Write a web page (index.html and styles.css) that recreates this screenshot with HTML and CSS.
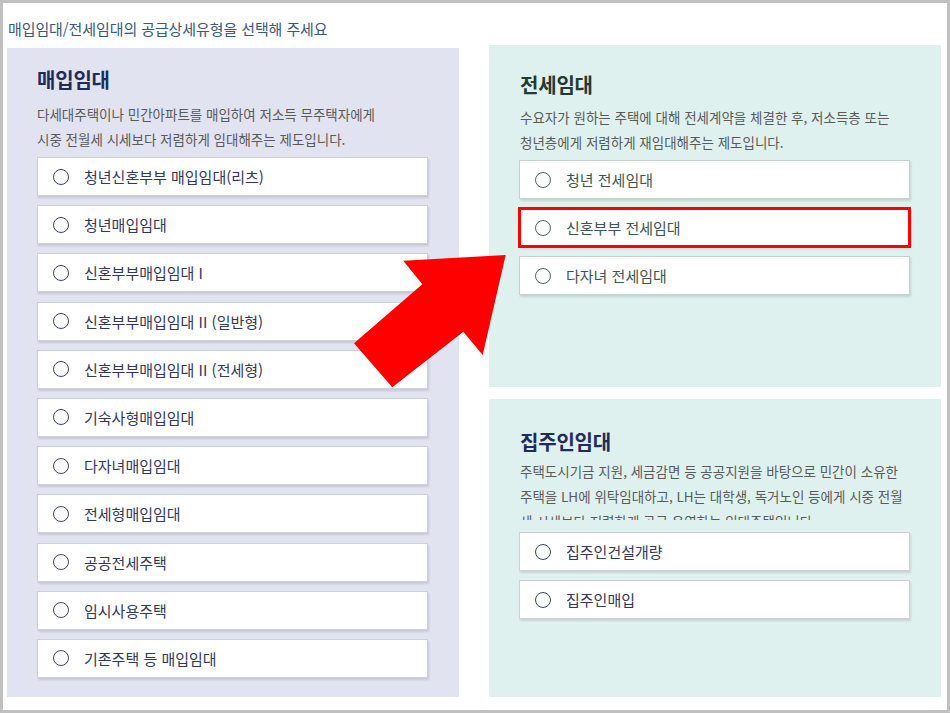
FILE: index.html
```html
<!DOCTYPE html>
<html lang="ko">
  <head>
    <meta charset="UTF-8" />
    <meta name="viewport" content="width=device-width, initial-scale=1.0" />
    <title>공급상세유형 선택</title>
    <link rel="stylesheet" href="styles.css">
  </head>
  <body>
    <div class="frame">
      <div class="col col-left">
        <h2 class="page-title">매입임대/전세임대의 공급상세유형을 선택해 주세요</h2>

        <section class="panel panel-purchase">
          <h3 class="panel-title">매입임대</h3>
          <p class="panel-desc">
            다세대주택이나 민간아파트를 매입하여 저소득 무주택자에게<br />
            시중 전월세 시세보다 저렴하게 임대해주는 제도입니다.
          </p>
          <ul class="option-list">
            <li class="option"><span class="radio"></span>청년신혼부부 매입임대(리츠)</li>
            <li class="option"><span class="radio"></span>청년매입임대</li>
            <li class="option"><span class="radio"></span>신혼부부매입임대 I</li>
            <li class="option"><span class="radio"></span>신혼부부매입임대 II (일반형)</li>
            <li class="option"><span class="radio"></span>신혼부부매입임대 II (전세형)</li>
            <li class="option"><span class="radio"></span>기숙사형매입임대</li>
            <li class="option"><span class="radio"></span>다자녀매입임대</li>
            <li class="option"><span class="radio"></span>전세형매입임대</li>
            <li class="option"><span class="radio"></span>공공전세주택</li>
            <li class="option"><span class="radio"></span>임시사용주택</li>
            <li class="option"><span class="radio"></span>기존주택 등 매입임대</li>
          </ul>
        </section>
      </div>

      <div class="col col-right">
        <section class="panel panel-jeonse">
          <h3 class="panel-title">전세임대</h3>
          <p class="panel-desc">
            수요자가 원하는 주택에 대해 전세계약을 체결한 후, 저소득층 또는<br />
            청년층에게 저렴하게 재임대해주는 제도입니다.
          </p>
          <ul class="option-list">
            <li class="option"><span class="radio"></span>청년 전세임대</li>
            <li class="option option-marked"><span class="radio"></span>신혼부부 전세임대</li>
            <li class="option"><span class="radio"></span>다자녀 전세임대</li>
          </ul>
        </section>

        <section class="panel panel-landlord">
          <h3 class="panel-title">집주인임대</h3>
          <p class="panel-desc panel-desc-clip">
            주택도시기금 지원, 세금감면 등 공공지원을 바탕으로 민간이 소유한<br />
            주택을 LH에 위탁임대하고, LH는 대학생, 독거노인 등에게 시중 전월<br />
            세 시세보다 저렴하게 공급 운영하는 임대주택입니다.
          </p>
          <ul class="option-list">
            <li class="option"><span class="radio"></span>집주인건설개량</li>
            <li class="option"><span class="radio"></span>집주인매입</li>
          </ul>
        </section>
      </div>

      <!-- annotation arrow -->
      <svg class="arrow" viewBox="350 250 160 140" aria-hidden="true">
        <polygon
          points="505.7,255 403.3,260.7 422.3,284.3 354,343.3 392.3,387.3 463.3,331.7 482.7,355"
          fill="#ff0000"
        />
      </svg>
    </div>
  </body>
</html>
```

FILE: styles.css
```css
:root {
  --frame: #c0c0c0;
  --purchase-bg: #e1e3f0;
  --jeonse-bg: #dff1ee;
  --navy: #1f2b5a;
  --navy-text: #323859;
  --green: #1f3b34;
  --green-text: #3c5750;
  --desc: #5a5a5a;
  --heading: #39597a;
  --marker: #ff0000;
}

* {
  margin: 0;
  padding: 0;
  box-sizing: border-box;
  font-family: "Noto Sans CJK KR", "Noto Sans", sans-serif;
}

body {
  background: #ffffff;
}

.frame {
  position: relative;
  width: 950px;
  height: 713px;
  border: 3px solid var(--frame);
  background: #ffffff;
  display: grid;
  grid-template-columns: 452px 452px;
  column-gap: 30px;
  padding: 0 6px 0 4px;
}

.page-title {
  height: 45px;
  padding: 15px 0 0 1px;
  font-size: 15px;
  line-height: 22px;
  font-weight: 400;
  color: var(--heading);
  letter-spacing: -0.1px;
}

.col-right {
  padding-top: 42px;
  display: flex;
  flex-direction: column;
  gap: 12px;
}

.panel {
  padding: 0 31px 0 30px;
}

.panel-purchase {
  height: 649px;
  padding-top: 17px;
  background: var(--purchase-bg);
}

.panel-jeonse {
  height: 342px;
  padding-top: 25px;
  background: var(--jeonse-bg);
}

.panel-landlord {
  height: 298px;
  padding-top: 28px;
  background: var(--jeonse-bg);
}

.panel-title {
  font-size: 20px;
  line-height: 30px;
  font-weight: 700;
  letter-spacing: -0.2px;
  color: var(--navy);
}

.panel-jeonse .panel-title {
  padding-left: 1px;
  color: var(--green);
}

.panel-landlord .panel-title {
  padding-left: 1px;
}

.panel-desc {
  font-size: 13.5px;
  line-height: 25px;
  color: var(--desc);
  white-space: nowrap;
}

.panel-purchase .panel-desc {
  margin: 7px 0 5px;
}

.panel-jeonse .panel-desc {
  margin: 5px 0 5px 1px;
}

.panel-desc-clip {
  height: 61px;
  overflow: hidden;
  margin: 2px 0 12px 1px;
}

.option-list {
  list-style: none;
  display: flex;
  flex-direction: column;
  gap: 9.2px;
}

.panel-jeonse .option-list {
  gap: 9px;
}

.option {
  height: 39px;
  display: flex;
  align-items: center;
  gap: 15px;
  padding-left: 15px;
  background: #ffffff;
  border: 1px solid #cdd0dc;
  box-shadow: 1px 2px 2px rgba(0, 0, 0, 0.12);
  font-size: 15px;
  color: var(--navy-text);
}

.radio {
  width: 16px;
  height: 16px;
  border-radius: 50%;
  border: 1.5px solid #3d4470;
  flex-shrink: 0;
}

.panel-jeonse .option {
  border-color: #c6d2cf;
  color: var(--green-text);
}

.panel-jeonse .radio {
  border-color: #4d6a62;
}

.option-marked {
  outline: 3px solid var(--marker);
  outline-offset: -2px;
}

.arrow {
  position: absolute;
  left: 347px;
  top: 247px;
  width: 160px;
  height: 140px;
  pointer-events: none;
}
```
